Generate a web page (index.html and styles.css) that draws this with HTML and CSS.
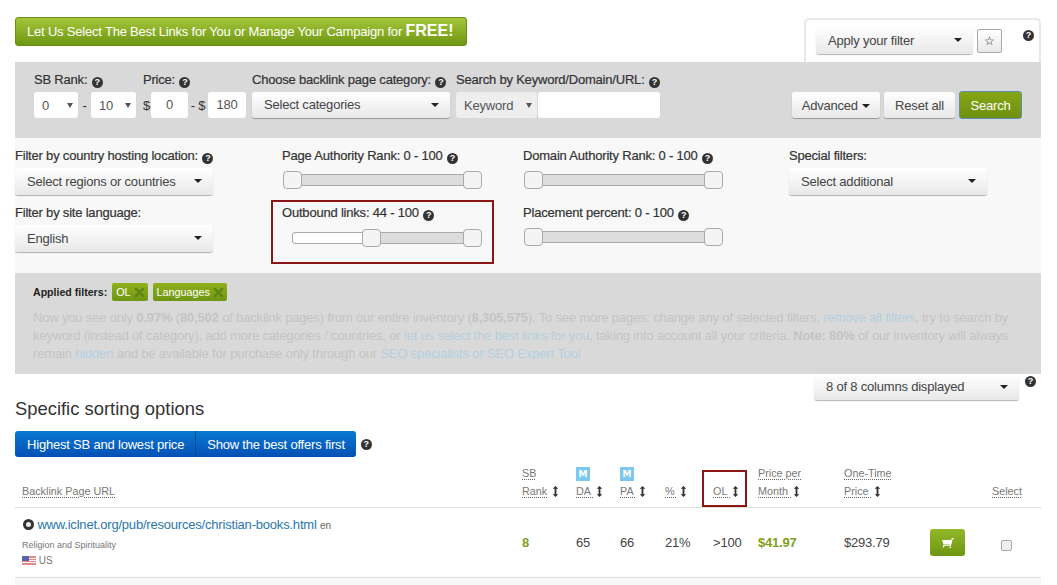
FILE: index.html
```html
<!DOCTYPE html>
<html lang="en">
<head>
    <meta charset="UTF-8">
    <title>Backlink search</title>
    <link rel="stylesheet" href="styles.css">
</head>
<body>
    <div class="container">
        <header class="top-row">
            <a class="free-btn" href="#">Let Us Select The Best Links for You or Manage Your Campaign for <b>FREE!</b></a>
            <div class="saved-tab">
                <div class="drop apply-drop">Apply your filter<i class="caret"></i></div>
                <button class="star-btn" type="button">☆</button>
                <span class="help tab-help">?</span>
            </div>
        </header>

        <section class="search-panel">
            <div class="field">
                <label>SB Rank: <span class="help">?</span></label>
                <div class="field-row">
                    <div class="mini-select sb-from">0<i class="tri"></i></div>
                    <span class="sep">-</span>
                    <div class="mini-select sb-to">10<i class="tri"></i></div>
                </div>
            </div>
            <div class="field price-field">
                <label>Price: <span class="help">?</span></label>
                <div class="field-row">
                    <span class="unit">$</span>
                    <div class="text-box price-from">0</div>
                    <span class="unit unit-to">- $</span>
                    <div class="text-box price-to">180</div>
                </div>
            </div>
            <div class="field cat-field">
                <label>Choose backlink page category: <span class="help">?</span></label>
                <div class="drop cat-drop">Select categories<i class="caret"></i></div>
            </div>
            <div class="field key-field">
                <label>Search by Keyword/Domain/URL: <span class="help">?</span></label>
                <div class="field-row">
                    <div class="mini-select key-select">Keyword<i class="tri"></i></div>
                    <div class="text-box key-input"></div>
                </div>
            </div>
            <div class="actions">
                <button class="btn adv-btn" type="button">Advanced <i class="caret inline"></i></button>
                <button class="btn reset-btn" type="button">Reset all</button>
                <button class="btn search-btn" type="button">Search</button>
            </div>
        </section>

        <section class="filter-panel">
            <div class="filter-cell col-a">
                <label>Filter by country hosting location: <span class="help">?</span></label>
                <div class="drop wide-drop">Select regions or countries<i class="caret"></i></div>
            </div>
            <div class="filter-cell col-b">
                <label>Page Authority Rank: 0 - 100 <span class="help">?</span></label>
                <div class="slider"><i class="handle" style="left: 0%"></i><i class="handle" style="left: 100%"></i></div>
            </div>
            <div class="filter-cell col-c">
                <label>Domain Authority Rank: 0 - 100 <span class="help">?</span></label>
                <div class="slider"><i class="handle" style="left: 0%"></i><i class="handle" style="left: 100%"></i></div>
            </div>
            <div class="filter-cell col-d">
                <label>Special filters:</label>
                <div class="drop wide-drop">Select additional<i class="caret"></i></div>
            </div>
            <div class="filter-cell col-a">
                <label>Filter by site language:</label>
                <div class="drop wide-drop">English<i class="caret"></i></div>
            </div>
            <div class="filter-cell col-b marked">
                <label>Outbound links: 44 - 100 <span class="help">?</span></label>
                <div class="slider">
                    <span class="slider-off" style="width: 44%"></span>
                    <i class="handle" style="left: 44%"></i><i class="handle" style="left: 100%"></i>
                </div>
            </div>
            <div class="filter-cell col-c">
                <label>Placement percent: 0 - 100 <span class="help">?</span></label>
                <div class="slider"><i class="handle" style="left: 0%"></i><i class="handle" style="left: 100%"></i></div>
            </div>
        </section>

        <section class="applied-panel">
            <div class="applied-row">
                <b>Applied filters:</b>
                <span class="tag">OL <svg viewBox="0 0 10 10"><path d="M1 1 9 9M9 1 1 9"/></svg></span>
                <span class="tag">Languages <svg viewBox="0 0 10 10"><path d="M1 1 9 9M9 1 1 9"/></svg></span>
            </div>
            <p class="applied-text">
                Now you see only <b>0.97%</b> (<b>80,502</b> of backlink pages) from our entire inventory (<b>8,305,575</b>). To see more pages: change any of selected filters, <a href="#">remove all filters</a>, try to search by<br>
                keyword (instead of category), add more categories / countries, or <a href="#">let us select the best links for you</a>, taking into account all your criteria. <b>Note: 80%</b> of our inventory will always<br>
                remain <a href="#">hidden</a> and be available for purchase only through our <a href="#">SEO specialists or SEO Expert Tool</a>
            </p>
        </section>

        <div class="columns-row">
            <div class="drop columns-drop">8 of 8 columns displayed<i class="caret"></i></div>
            <span class="help">?</span>
        </div>

        <h2 class="sort-title">Specific sorting options</h2>
        <div class="sort-row">
            <div class="sort-group">
                <button type="button">Highest SB and lowest price</button>
                <button type="button">Show the best offers first</button>
            </div>
            <span class="help">?</span>
        </div>

        <table class="links">
            <colgroup>
                <col class="c-url"><col class="c-sb"><col class="c-da"><col class="c-pa"><col class="c-pct">
                <col class="c-ol"><col class="c-month"><col class="c-once"><col class="c-cart"><col class="c-sel">
            </colgroup>
            <thead>
                <tr>
                    <th><u>Backlink Page URL</u></th>
                    <th><u>SB</u><br><u>Rank</u>&nbsp; <svg class="sort" viewBox="0 0 7 12"><path d="M3.5 0 6.5 3H4.5V9H6.5L3.5 12 .5 9H2.5V3H.5Z"/></svg></th>
                    <th><span class="moz">M</span><br><u>DA&nbsp;</u> <svg class="sort" viewBox="0 0 7 12"><path d="M3.5 0 6.5 3H4.5V9H6.5L3.5 12 .5 9H2.5V3H.5Z"/></svg></th>
                    <th><span class="moz">M</span><br><u>PA&nbsp;</u> <svg class="sort" viewBox="0 0 7 12"><path d="M3.5 0 6.5 3H4.5V9H6.5L3.5 12 .5 9H2.5V3H.5Z"/></svg></th>
                    <th><u>%&nbsp;</u> <svg class="sort" viewBox="0 0 7 12"><path d="M3.5 0 6.5 3H4.5V9H6.5L3.5 12 .5 9H2.5V3H.5Z"/></svg></th>
                    <th class="th-marked"><u>OL&nbsp;</u> <svg class="sort" viewBox="0 0 7 12"><path d="M3.5 0 6.5 3H4.5V9H6.5L3.5 12 .5 9H2.5V3H.5Z"/></svg></th>
                    <th><u>Price per</u><br><u>Month&nbsp;</u> <svg class="sort" viewBox="0 0 7 12"><path d="M3.5 0 6.5 3H4.5V9H6.5L3.5 12 .5 9H2.5V3H.5Z"/></svg></th>
                    <th><u>One-Time</u><br><u>Price&nbsp;</u> <svg class="sort" viewBox="0 0 7 12"><path d="M3.5 0 6.5 3H4.5V9H6.5L3.5 12 .5 9H2.5V3H.5Z"/></svg></th>
                    <th></th>
                    <th><u>Select</u></th>
                </tr>
            </thead>
            <tbody>
                <tr>
                    <td class="url-cell">
                        <div class="url-line"><i class="site-dot"></i> <a href="#">www.iclnet.org/pub/resources/christian-books.html</a> <small>en</small></div>
                        <div class="cat-line">Religion and Spirituality</div>
                        <div class="geo-line">
                            <svg class="flag" viewBox="0 0 14 9"><rect width="14" height="9" fill="#e58a8a"/><path d="M0 2.5h14M0 4.5h14M0 6.5h14" stroke="#f6f6f6"/><rect width="7" height="5" fill="#5566a8"/></svg>
                            US
                        </div>
                    </td>
                    <td class="sb-val">8</td>
                    <td>65</td>
                    <td>66</td>
                    <td>21%</td>
                    <td>&gt;100</td>
                    <td class="price-val">$41.97</td>
                    <td>$293.79</td>
                    <td>
                        <button class="cart-btn" type="button">
                            <svg viewBox="0 0 12 11"><path d="M0 2H9.2L9.8 0H12V1H10.7L9 8H2.2V9.5H1V7.2H7.6V6.5H1.5Z" fill="#fff"/><rect x="7.5" y="8.5" width="1.5" height="1.5" fill="#fff"/></svg>
                        </button>
                    </td>
                    <td class="sel-cell"><input type="checkbox"></td>
                </tr>
            </tbody>
        </table>
        <div class="next-row"></div>
    </div>
</body>
</html>
```

FILE: styles.css
```css
* {
    margin: 0;
    padding: 0;
    box-sizing: border-box;
    font-family: "Liberation Sans", Arial, sans-serif;
}

body {
    background: #fff;
    height: 585px;
    overflow: hidden;
    color: #333;
    font-size: 13px;
    letter-spacing: -0.2px;
}

button {
    letter-spacing: -0.2px;
}

.container {
    width: 1026px;
    margin-left: 15px;
}

label {
    display: block;
    height: 14px;
    font-size: 13px;
    line-height: 14px;
    white-space: nowrap;
    color: #333;
    -webkit-text-stroke: 0.2px #333;
}

.help {
    display: inline-block;
    width: 11px;
    height: 11px;
    border-radius: 50%;
    background: #333;
    color: #fff;
    font-size: 9px;
    font-weight: bold;
    line-height: 11px;
    letter-spacing: 0;
    text-align: center;
    vertical-align: -1px;
    -webkit-text-stroke: 0;
}

label .help {
    margin-left: 1px;
}

.caret {
    flex: none;
    width: 0;
    height: 0;
    margin-left: auto;
    border-left: 4px solid transparent;
    border-right: 4px solid transparent;
    border-top: 4px solid #222;
}

.caret.inline {
    display: inline-block;
    margin-left: 1px;
    vertical-align: 2px;
}

.drop {
    display: flex;
    align-items: center;
    height: 27px;
    padding: 0 11px 1px 12px;
    font-size: 13px;
    color: #444;
    background: linear-gradient(180deg, #fff 0%, #e8e8e8 100%);
    border-radius: 3px;
    box-shadow: 0 1px 1px rgba(0, 0, 0, 0.3);
}

/* top row */
.top-row {
    display: flex;
    justify-content: space-between;
    align-items: flex-start;
    height: 62px;
    padding-top: 17px;
}

.free-btn {
    display: block;
    height: 29px;
    width: 452px;
    padding-left: 11px;
    line-height: 26px;
    font-size: 13px;
    color: #fff;
    text-decoration: none;
    white-space: nowrap;
    background: linear-gradient(180deg, #a4c639 0%, #6f9612 100%);
    border: 1px solid #6b8c17;
    border-radius: 3px;
}

.free-btn b {
    font-size: 16px;
    letter-spacing: 0;
}

.saved-tab {
    position: relative;
    display: flex;
    align-items: flex-start;
    width: 237px;
    height: 44px;
    margin-top: 1px;
    padding: 7px 0 0 10px;
    border: 2px solid #e8e8e8;
    border-bottom: none;
    border-radius: 5px 5px 0 0;
}

.apply-drop {
    width: 157px;
}

.star-btn {
    width: 25px;
    height: 24px;
    margin: 2px 0 0 4px;
    font-size: 12px;
    color: #222;
    background: linear-gradient(180deg, #fff 0%, #e8e8e8 100%);
    border: 1px solid #aaa;
    border-radius: 2px;
}

.tab-help {
    position: absolute;
    top: 10px;
    right: 5px;
}

/* gray search panel */
.search-panel {
    display: flex;
    height: 76px;
    padding: 11px 19px 0;
    background: #d9d9d9;
}

.field-row {
    display: flex;
    align-items: center;
    margin-top: 5px;
}

.field .drop {
    margin-top: 5px;
}

.mini-select {
    display: flex;
    align-items: center;
    justify-content: space-between;
    height: 26px;
    padding: 0 5px 0 8px;
    font-size: 13px;
    color: #555;
    background: #fff;
    border-radius: 3px;
}

.tri {
    width: 0;
    height: 0;
    border-left: 3px solid transparent;
    border-right: 3px solid transparent;
    border-top: 5px solid #555;
}

.sb-from {
    width: 44px;
}

.sb-to {
    width: 45px;
}

.sep {
    width: 13px;
    text-align: center;
}

.price-field {
    margin-left: 7px;
}

.unit {
    width: 8px;
}

.unit-to {
    width: 20px;
    text-align: center;
    white-space: nowrap;
}

.text-box {
    height: 26px;
    font-size: 13px;
    line-height: 26px;
    text-align: center;
    color: #555;
    background: #fff;
    border-radius: 3px;
}

.price-from {
    width: 37px;
}

.price-to {
    width: 38px;
}

.cat-field {
    width: 198px;
    margin-left: 6px;
}

.cat-drop {
    height: 26px;
}

.key-field {
    margin-left: 6px;
}

.key-select {
    width: 81px;
    background: #eee;
}

.key-input {
    width: 122px;
    margin-left: 1px;
}

.actions {
    display: flex;
    align-items: center;
    gap: 4px;
    margin: 19px 0 0 auto;
    height: 26px;
}

.btn {
    height: 26px;
    font-size: 13px;
    color: #444;
    border: none;
    border-radius: 3px;
    background: linear-gradient(180deg, #fff 0%, #e8e8e8 100%);
    box-shadow: 0 1px 1px rgba(0, 0, 0, 0.3);
}

.adv-btn {
    width: 88px;
}

.reset-btn {
    width: 71px;
}

.search-btn {
    width: 63px;
    height: 28px;
    color: #fff;
    background: linear-gradient(180deg, #86a616 0%, #6f9010 100%);
    border: 1px solid #5b8fb8;
    box-shadow: none;
}

/* light filter panel */
.filter-panel {
    display: grid;
    grid-template-columns: 253px 241px 280px 1fr;
    grid-auto-rows: 57px;
    height: 135px;
    padding-top: 11px;
    background: #f8f8f8;
}

.filter-cell.col-a { grid-column: 1; }
.filter-cell.col-b { grid-column: 2; padding-left: 14px; }
.filter-cell.col-c { grid-column: 3; padding-left: 14px; }
.filter-cell.col-d { grid-column: 4; }

.filter-cell .drop {
    margin-top: 5px;
}

.wide-drop {
    width: 198px;
}

.slider {
    position: relative;
    width: 182px;
    height: 12px;
    margin: 11px 0 0 10px;
    background: #dcdcdc;
    border: 1px solid #aaa;
    border-radius: 3px;
}

.marked .slider {
    margin-top: 12px;
}

.slider-off {
    position: absolute;
    top: 0;
    left: 0;
    height: 10px;
    background: #fff;
    border-radius: 3px;
}

.handle {
    position: absolute;
    top: -4px;
    width: 19px;
    height: 18px;
    margin-left: -10px;
    background: #f4f4f4;
    border: 1px solid #aaa;
    border-radius: 4px;
}

.marked {
    position: relative;
}

.marked::after {
    content: "";
    position: absolute;
    inset: -6px 15px -1px 3px;
    border: 2px solid #8c1616;
    pointer-events: none;
}

/* applied filters */
.applied-panel {
    height: 101px;
    padding: 10px 18px 0;
    background: #d9d9d9;
}

.applied-row {
    display: flex;
    align-items: center;
    gap: 5px;
    font-size: 10.6px;
    letter-spacing: 0;
    color: #222;
}

.tag {
    display: flex;
    align-items: center;
    gap: 3px;
    height: 18px;
    padding: 0 3px 0 4px;
    font-size: 10.8px;
    color: #fff;
    background: linear-gradient(180deg, #8eb11d 0%, #6f9612 100%);
    border-radius: 2px;
}

.tag svg {
    width: 11px;
    height: 11px;
    fill: none;
    stroke: #5f8413;
    stroke-width: 2.2;
}

.applied-text {
    margin-top: 8px;
    font-size: 13px;
    letter-spacing: -0.17px;
    line-height: 18px;
    color: #c4c4c4;
    white-space: nowrap;
}

.applied-text a {
    color: #b5cfe0;
    text-decoration: none;
}

/* columns + sorting */
.columns-row {
    display: flex;
    align-items: flex-start;
    height: 25px;
    padding-left: 799px;
}

.columns-drop {
    width: 205px;
    height: 26px;
    border-radius: 0 0 3px 3px;
}

.columns-row .help {
    margin: 2px 0 0 6px;
}

.sort-title {
    font-size: 18.4px;
    font-weight: normal;
    line-height: 20px;
    letter-spacing: 0;
    color: #333;
}

.sort-row {
    display: flex;
    align-items: center;
    gap: 5px;
    margin-top: 12px;
}

.sort-group {
    display: flex;
    height: 26px;
    border-radius: 3px;
    overflow: hidden;
}

.sort-group button {
    padding: 0 11px 0 12px;
    font-size: 13px;
    color: #fff;
    border: none;
    background: linear-gradient(180deg, #0a78d0 0%, #0450b4 100%);
}

.sort-group button + button {
    padding: 0 11px;
    border-left: 1px solid #0a4a94;
}

/* table */
.links {
    width: 1026px;
    table-layout: fixed;
    border-collapse: collapse;
}

.c-url { width: 500px; }
.c-sb { width: 54px; }
.c-da { width: 44px; }
.c-pa { width: 45px; }
.c-pct { width: 48px; }
.c-ol { width: 45px; }
.c-month { width: 86px; }
.c-once { width: 86px; }
.c-cart { width: 62px; }
.c-sel { width: 56px; }

.links th {
    height: 50px;
    padding: 0 0 7px 7px;
    font-size: 10.8px;
    font-weight: normal;
    letter-spacing: 0;
    line-height: 18px;
    text-align: left;
    vertical-align: bottom;
    color: #777;
    border-bottom: 1px solid #ddd;
    white-space: nowrap;
}

.links th u {
    text-decoration: underline dotted #666;
    text-underline-offset: 2px;
}

.sort {
    width: 7px;
    height: 11px;
    margin-left: -1px;
    vertical-align: -2px;
    fill: #333;
}

.moz {
    display: inline-block;
    width: 14px;
    height: 14px;
    margin-top: 3px;
    font-family: "DejaVu Sans", sans-serif;
    font-size: 9px;
    font-weight: bold;
    line-height: 14px;
    text-align: center;
    color: #fff;
    background: #7cc8ee;
    vertical-align: top;
}

.th-marked {
    position: relative;
}

.th-marked::after {
    content: "";
    position: absolute;
    top: 13px;
    bottom: 0;
    left: -4px;
    right: 4px;
    border: 2px solid #8c1616;
}

.links td {
    height: 70px;
    padding-left: 7px;
    font-size: 13px;
    color: #444;
    border-bottom: 1px solid #ddd;
}

.url-line {
    line-height: 18px;
    white-space: nowrap;
}

.url-line a {
    color: #2a76ac;
    text-decoration: none;
}

.url-line small {
    font-size: 10px;
    letter-spacing: 0;
    color: #666;
}

.site-dot {
    display: inline-block;
    width: 11px;
    height: 11px;
    margin-left: 1px;
    vertical-align: -1px;
    border-radius: 50%;
    background: #eee;
    border: 3px solid #333;
}

.cat-line {
    margin-top: 3px;
    font-size: 9px;
    letter-spacing: 0;
    line-height: 14px;
    color: #777;
}

.geo-line {
    margin-top: 2px;
    font-size: 10px;
    letter-spacing: 0;
    line-height: 14px;
    color: #777;
}

.flag {
    width: 14px;
    height: 9px;
    vertical-align: -1px;
}

.sb-val, .price-val {
    font-weight: bold;
    color: #7f9f1d !important;
}

.cart-btn {
    display: block;
    width: 35px;
    height: 27px;
    margin-top: 1px;
    border: none;
    border-radius: 3px;
    background: linear-gradient(180deg, #92b82a 0%, #6f9612 100%);
}

.cart-btn svg {
    width: 12px;
    height: 11px;
    vertical-align: middle;
}

.sel-cell input {
    display: block;
    width: 11px;
    height: 11px;
    margin: 6px 0 0 9px;
    appearance: none;
    background: #eee;
    border: 1px solid #aaa;
    border-radius: 2px;
}

.next-row {
    height: 20px;
    background: #f8f8f8;
}
```
